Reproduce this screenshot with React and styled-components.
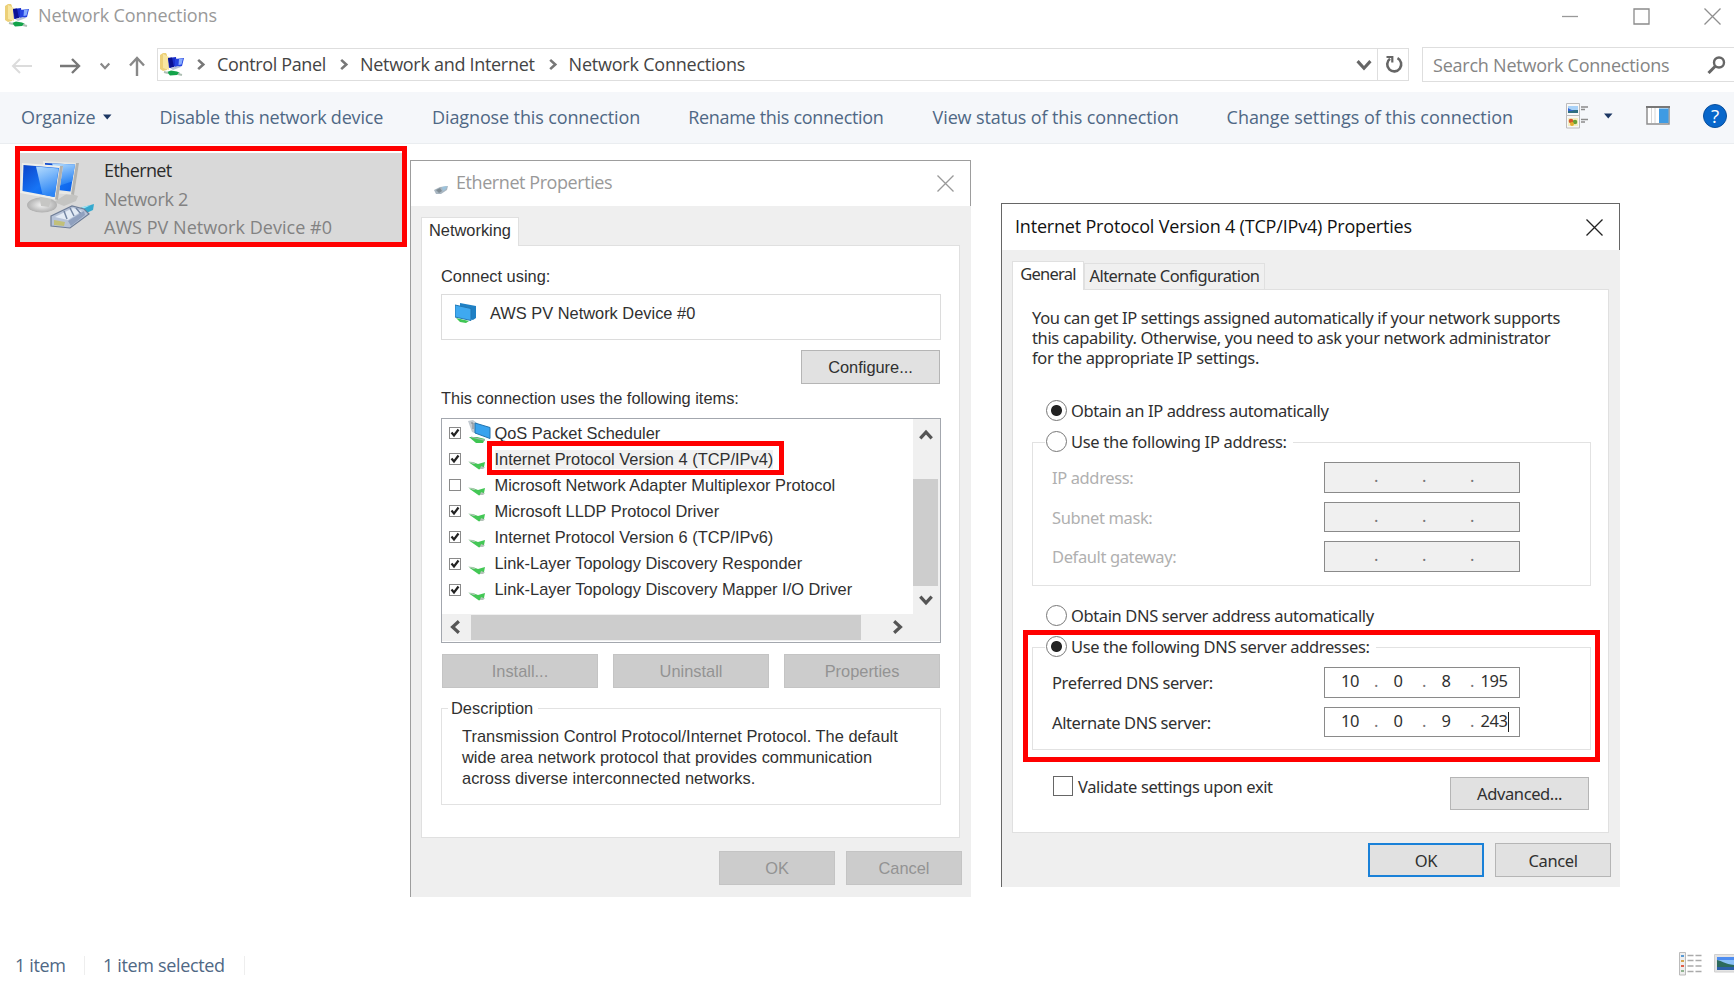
import React from 'react';
import styled, { createGlobalStyle, css } from 'styled-components';

/* ---------- icons ---------- */

const FolderIcon = () => (
  <svg width="25" height="24" viewBox="0 0 25 24">
    <path d="M0 2l3-2h3l1 2v15l-4 1-3-2z" fill="#ecd078" />
    <path d="M3 1l6 3v13l-6-2z" fill="#f8e6a0" />
    <path d="M8 5l8-1 1 9-8 2z" fill="#1a2fcb" />
    <path d="M8 5l4-.5 2 9.500-4 1z" fill="#0a1192" />
    <path d="M15 6l9-1-2 8-7 2z" fill="#2443e0" />
    <path d="M19 6l4-.5-1.500 6-3 .5z" fill="#86abff" />
    <path d="M10 15l8-2 3 1-8 3z" fill="#b9c3d6" />
    <path d="M7 19l4-1.500 6 1 3 1.500-3 2-7 .5z" fill="#13a34a" />
    <path d="M4 19l4 1M18 21l4 1" stroke="#aebfb3" strokeWidth="2" />
  </svg>
);

const NetworkIcon = () => (
  <svg width="76" height="72" viewBox="0 0 76 72">
    <defs>
      <linearGradient id="screen" x1="0" y1="0" x2="1" y2="1">
        <stop offset="0" stopColor="#0b43c9" />
        <stop offset="0.55" stopColor="#1774f5" />
        <stop offset="1" stopColor="#0a5fe8" />
      </linearGradient>
      <linearGradient id="gleam" x1="0" y1="0" x2="0.3" y2="1">
        <stop offset="0" stopColor="#b5dcfd" />
        <stop offset="1" stopColor="#2d86f5" />
      </linearGradient>
      <radialGradient id="foot">
        <stop offset="0" stopColor="#f4f4f4" />
        <stop offset="1" stopColor="#b0b0b0" />
      </radialGradient>
    </defs>
    <path d="M34 42l14-9 10 3-2 5-12 5z" fill="#c4c4c2" />
    <path d="M23 1l36 2-5 32-30-3z" fill="#e8e8e4" />
    <path d="M56 3l3 0-5 32-3-.5z" fill="#b3b3b0" />
    <path d="M25 3l30 1.500-4.500 27-25-3z" fill="url(#screen)" />
    <path d="M32 3.500l23 1-3 17-12 4z" fill="url(#gleam)" />
    <ellipse cx="22" cy="45" rx="15" ry="7.500" fill="url(#foot)" />
    <path d="M19 34l13 2-3 11-8-1z" fill="#c6c6c4" />
    <path d="M2 3l41 3-5 34-38-7z" fill="#eeeeea" />
    <path d="M40 6l3 0-5 34-3-.5z" fill="#b0b0ae" />
    <path d="M3.500 5l35.500 3-4.500 29-32-6z" fill="url(#screen)" />
    <path d="M16 6.500l22.500 2-4 28.500-12-2.500z" fill="url(#gleam)" />
    <path d="M60 48l14-4-1 6-11 5z" fill="#35a9cf" />
    <path d="M62 47l9-2-8 4z" fill="#9be3f5" />
    <path d="M31 56l21-10 12 3 5 5-19 14-19-2z" fill="#b7c3d8" stroke="#6e7d97" strokeWidth="1.200" />
    <path d="M35 57l18-9 9 3-14 9z" fill="#e3ebf5" />
    <path d="M44 51l3 8M50 48l4 8M56 48l5 6" stroke="#7385a3" strokeWidth="1.500" fill="none" />
    <path d="M34 60l11 2-1 4-10-1z" fill="#c2c07a" />
    <path d="M48 61l16-10 1 4-14 11z" fill="#8fa0be" />
  </svg>
);

const PlugIcon = () => (
  <svg width="14" height="9" viewBox="0 0 14 9">
    <path d="M0 4l6-3 8-1-1 4-6 4-5 0z" fill="#a9b6c1" />
    <path d="M2 4l4-2 2 3-3 2z" fill="#7f8c94" />
    <path d="M8 1l5-1-1 3-3 2z" fill="#9cc3dc" />
  </svg>
);

const AdapterIcon = () => (
  <svg width="22" height="20" viewBox="0 0 22 20">
    <path d="M5 0l16 3v12l-3 2-13-3z" fill="#1f80c4" />
    <path d="M0 2l16 3.500v12L0 14z" fill="#3fa9f0" stroke="#2277b3" />
    <path d="M1 15l13 3-3 2-6-1z" fill="#3fc653" />
  </svg>
);

const QosIcon = () => (
  <svg width="23" height="26" viewBox="0 0 23 26">
    <path d="M0 1l5-1 4 3v11l-5-2z" fill="#c3cbd2" />
    <path d="M3 3l2 0v6" fill="none" stroke="#7c8790" />
    <path d="M7 3l15 4.500v11L7 13z" fill="#38a3ee" stroke="#2374ae" />
    <path d="M1 17l8 0 8 2-2 4-7 0z" fill="#3fc653" />
    <path d="M3 16.500l14 3v1.500L3 17.500z" fill="#9fb3a8" />
  </svg>
);

const ProtocolIcon = () => (
  <svg width="23" height="26" viewBox="0 0 23 26">
    <path d="M1 16.500l5 0 4 1.500 7-2-1 5-5 2.500z" fill="#43c755" />
    <path d="M0 15.500l5 .5 3 2-3 0z" fill="#a8c7ae" />
    <path d="M13 20l4 1.500-2 1.500-3 0z" fill="#b5c2ba" />
  </svg>
);

const Chevron = ({ d = 'down', size = 14, color = '#555', weight = 3 }) => {
  const paths = {
    down: 'M2 4l5 5.500 5-5.500',
    up: 'M2 10l5-5.500 5 5.500',
    left: 'M9.500 2l-5.500 5 5.500 5',
    right: 'M4.500 2l5.500 5-5.500 5',
  };
  return (
    <svg width={size} height={size} viewBox="0 0 14 14" fill="none" stroke={color} strokeWidth={weight}>
      <path d={paths[d]} />
    </svg>
  );
};

const Caret = () => (
  <svg width="9" height="6" viewBox="0 0 9 6">
    <path d="M0 .5h8.500L4.250 5.500z" fill="#1c3763" />
  </svg>
);

const Arrow = ({ color, left, up }) => (
  <svg width="22" height="20" viewBox="0 0 22 20" fill="none" stroke={color} strokeWidth={left ? 2 : 2.400}>
    {up && <path d="M11 20V2M4 9.500l7-7.500 7 7.500" />}
    {left && <path d="M21 10H2M9 3l-7 7 7 7" />}
    {!up && !left && <path d="M1 10h19M13 3l7 7-7 7" />}
  </svg>
);

const Cross = ({ color }) => (
  <svg width="17" height="17" viewBox="0 0 17 17" stroke={color} strokeWidth="1.300">
    <path d="M.5 .5l16 16M16.500 .5l-16 16" />
  </svg>
);

const RefreshIcon = () => (
  <svg width="19" height="19" viewBox="0 0 19 19" fill="none" stroke="#666" strokeWidth="2.600">
    <path d="M12.500 3.200a7 7 0 1 1-7.500 .6" />
    <path d="M1.500 2h5.800v5.600" strokeWidth="2.200" />
  </svg>
);

const SearchIcon = () => (
  <svg width="19" height="18" viewBox="0 0 19 18" fill="none" stroke="#666">
    <circle cx="12" cy="6.500" r="5" strokeWidth="2.400" />
    <path d="M8.500 10L1.500 17" strokeWidth="3" />
  </svg>
);

const ViewIcon = () => (
  <svg width="23" height="26" viewBox="0 0 23 26">
    <path d="M.5 .5h13v12H.5zM.5 12.500h13v12.500H.5z" fill="#f8f8f8" stroke="#bcbcbc" />
    <path d="M2 3h10v7H2z" fill="#a9d2f8" />
    <path d="M2 6l4 1 6 0v3H2z" fill="#2f6e80" />
    <path d="M2 5l3 2 4 1-7 0z" fill="#3566d8" />
    <path d="M2 15h10v8H2z" fill="#f3efc2" />
    <circle cx="5" cy="18" r="2.300" fill="#d8572e" />
    <circle cx="9" cy="19" r="2.300" fill="#6aa136" />
    <circle cx="6" cy="21" r="2" fill="#e4ae2d" />
    <path d="M15 4h7M15 6.500h4M15 16.500h7M15 19h4" stroke="#8c8c8c" strokeWidth="1.300" />
  </svg>
);

const PaneIcon = () => (
  <svg width="24" height="19" viewBox="0 0 24 19">
    <path d="M1 1h22v17H1z" fill="#fff" stroke="#8f8f8f" strokeWidth="1.500" />
    <path d="M0 1h24" stroke="#777" strokeWidth="2" />
    <path d="M5.500 2v15M9 2v15" stroke="#d6d6d6" />
    <path d="M13 2.500h9.500V17H13z" fill="#3f9be3" />
  </svg>
);

const DetailsIcon = () => (
  <svg width="23" height="24" viewBox="0 0 23 24">
    <path d="M.5 .5h6v22.500h-6z" fill="#eee" stroke="#bbb" />
    <path d="M2 4h3" stroke="#5a9bd5" strokeWidth="2" />
    <path d="M2 9h3" stroke="#d6a44d" strokeWidth="2" />
    <path d="M2 14h3" stroke="#e0604a" strokeWidth="2" />
    <path d="M2 19h3" stroke="#8fb38f" strokeWidth="2" />
    <path d="M8.500 3.500h6M8.500 8.500h6M8.500 14h6M8.500 19.500h6M16.500 3.500h6M16.500 8.500h6M16.500 14h6M16.500 19.500h6" stroke="#aaa" strokeWidth="1.600" />
  </svg>
);

const ThumbsIcon = () => (
  <svg width="20" height="19" viewBox="0 0 20 19">
    <path d="M.5 .5H22v17.500H.5z" fill="#e4e4e4" stroke="#d0d0d0" />
    <path d="M3 3h20v13H3z" fill="#8cc1f7" />
    <path d="M3 3h20v3H3z" fill="#4e8df0" />
    <path d="M3 6c5 1 8 4 17 5v3H3z" fill="#2c6a5c" />
    <path d="M3 13h20v3H3z" fill="#2c5fa8" />
  </svg>
);

/* ---------- explorer window ---------- */

const Explorer = () => (
  <Window>
    <TitleBar>
      <FolderIcon />
      <WindowTitle $ls={-0.09}>Network Connections</WindowTitle>
      <WindowButtons>
        <svg width="16" height="17" viewBox="0 0 16 17">
          <path d="M0 8.500h16" stroke="#999" strokeWidth="1.300" />
        </svg>
        <svg width="17" height="17" viewBox="0 0 17 17">
          <path d="M1 1h15v15H1z" fill="none" stroke="#8a8a8a" strokeWidth="1.300" />
        </svg>
        <Cross color="#8f8f8f" />
      </WindowButtons>
    </TitleBar>

    <NavRow>
      <NavButtons>
        <Arrow left color="#dcdcdc" />
        <Arrow color="#777" />
        <Chevron size={12} color="#888" weight={2.6} />
        <Arrow up color="#888" />
      </NavButtons>
      <Address>
        <FolderIcon />
        <Crumbs>
          {crumbs.map(crumb => (
            <Crumb key={crumb.name} $ls={crumb.ls}>
              <Chevron d="right" size={13} color="#777" weight={2.8} />
              <span>{crumb.name}</span>
            </Crumb>
          ))}
        </Crumbs>
        <Chevron size={18} color="#666" weight={2.4} />
        <Refresh>
          <RefreshIcon />
        </Refresh>
      </Address>
      <Search>
        <Placeholder>Search Network Connections</Placeholder>
        <SearchIcon />
      </Search>
    </NavRow>

    <Toolbar>
      <Commands>
        <Command $ls={-0.1} $gap={47}>
          Organize
          <Caret />
        </Command>
        {commands.map(command => (
          <Command key={command.name} $ls={command.ls} $gap={command.gap}>
            {command.name}
          </Command>
        ))}
      </Commands>
      <ViewTools>
        <ViewIcon />
        <Caret />
        <PaneIcon />
        <Help>?</Help>
      </ViewTools>
    </Toolbar>

    <Files>
      <Connection>
        <NetworkIcon />
        <ConnectionText>
          <ConnectionName>Ethernet</ConnectionName>
          <ConnectionInfo $ls={-0.29}>Network 2</ConnectionInfo>
          <ConnectionInfo $ls={0.04}>AWS PV Network Device #0</ConnectionInfo>
        </ConnectionText>
      </Connection>
    </Files>

    <StatusBar>
      <Status $width={70}>1 item</Status>
      <Status $width={142}>1 item selected</Status>
      <StatusIcons>
        <DetailsIcon />
        <ThumbsIcon />
      </StatusIcons>
    </StatusBar>
  </Window>
);

const crumbs = [
  { name: 'Control Panel', ls: -0.35 },
  { name: 'Network and Internet', ls: -0.3 },
  { name: 'Network Connections', ls: -0.22 },
];

const commands = [
  { name: 'Disable this network device', ls: -0.2, gap: 49 },
  { name: 'Diagnose this connection', ls: -0.12, gap: 48 },
  { name: 'Rename this connection', ls: -0.3, gap: 49 },
  { name: 'View status of this connection', ls: -0.12, gap: 48 },
  { name: 'Change settings of this connection', ls: -0.05, gap: 0 },
];

/* ---------- ethernet properties ---------- */

const EthernetProperties = () => (
  <EthernetDialog>
    <DialogTitle $height={45} $muted>
      <PlugIcon />
      <Title $ls={-0.43}>Ethernet Properties</Title>
      <Cross color="#999" />
    </DialogTitle>
    <DialogBody>
      <Tabs>
        <Tab $active $width={98}>Networking</Tab>
      </Tabs>
      <NetworkingPanel>
        <Label>Connect using:</Label>
        <Device>
          <AdapterIcon />
          AWS PV Network Device #0
        </Device>
        <ConfigureButton>Configure...</ConfigureButton>
        <Label>This connection uses the following items:</Label>
        <ItemList>
          <Items>
            {items.map(item => (
              <Item key={item.name}>
                <ItemCheck>
                  {item.checked && (
                    <svg width="10" height="10" viewBox="0 0 10 10">
                      <path d="M1.500 4.500l2.500 3 4.500-6" fill="none" stroke="#222" strokeWidth="2.200" />
                    </svg>
                  )}
                </ItemCheck>
                {item.qos ? <QosIcon /> : <ProtocolIcon />}
                {item.marked ? (
                  <MarkedName>
                    {item.name}
                    <ItemFrame />
                  </MarkedName>
                ) : (
                  <span>{item.name}</span>
                )}
              </Item>
            ))}
          </Items>
          <VerticalScroll>
            <Chevron d="up" size={16} weight={2.8} />
            <VerticalThumb />
            <Chevron size={16} weight={2.8} />
          </VerticalScroll>
          <HorizontalScroll>
            <Chevron d="left" size={16} weight={2.8} />
            <HorizontalThumb />
            <Chevron d="right" size={16} weight={2.8} />
          </HorizontalScroll>
        </ItemList>
        <ItemButtons>
          <Button $disabled>Install...</Button>
          <Button $disabled>Uninstall</Button>
          <Button $disabled>Properties</Button>
        </ItemButtons>
        <Description>
          <DescriptionLegend>Description</DescriptionLegend>
          <p>
            Transmission Control Protocol/Internet Protocol. The default
            <br />
            wide area network protocol that provides communication
            <br />
            across diverse interconnected networks.
          </p>
        </Description>
      </NetworkingPanel>
      <Actions $top={13} $gap={11} $right={9}>
        <Button $disabled $width={116}>OK</Button>
        <Button $disabled $width={116}>Cancel</Button>
      </Actions>
    </DialogBody>
  </EthernetDialog>
);

const items = [
  { name: 'QoS Packet Scheduler', checked: true, qos: true },
  { name: 'Internet Protocol Version 4 (TCP/IPv4)', checked: true, marked: true },
  { name: 'Microsoft Network Adapter Multiplexor Protocol', checked: false },
  { name: 'Microsoft LLDP Protocol Driver', checked: true },
  { name: 'Internet Protocol Version 6 (TCP/IPv6)', checked: true },
  { name: 'Link-Layer Topology Discovery Responder', checked: true },
  { name: 'Link-Layer Topology Discovery Mapper I/O Driver', checked: true },
];

/* ---------- tcp/ipv4 properties ---------- */

const IpInput = ({ value = ['', '', '', ''], disabled, focused }) => (
  <IpBox $disabled={disabled}>
    {value.map((octet, i) => (
      <React.Fragment key={i}>
        {i > 0 && <Dot>.</Dot>}
        <Octet>
          {octet}
          {focused && i === 3 && <TextCursor />}
        </Octet>
      </React.Fragment>
    ))}
  </IpBox>
);

const Ipv4Properties = () => (
  <Ipv4Dialog>
    <DialogTitle $height={46}>
      <Title $ls={-0.19}>Internet Protocol Version 4 (TCP/IPv4) Properties</Title>
      <Cross color="#222" />
    </DialogTitle>
    <DialogBody>
      <Tabs>
        <Tab $active $width={72} $ls={-0.75}>General</Tab>
        <Tab $width={181} $ls={-0.56}>Alternate Configuration</Tab>
      </Tabs>
      <GeneralPanel>
        <Intro>
          You can get IP settings assigned automatically if your network supports
          <br />
          this capability. Otherwise, you need to ask your network administrator
          <br />
          for the appropriate IP settings.
        </Intro>
        <Option $top={32}>
          <Radio $checked />
          Obtain an IP address automatically
        </Option>
        <Group $height={144} $top={21}>
          <GroupOption $ls={-0.3}>
            <Radio />
            Use the following IP address:
          </GroupOption>
          <Field $disabled>
            <span>IP address:</span>
            <IpInput disabled />
          </Field>
          <Field $disabled>
            <span>Subnet mask:</span>
            <IpInput disabled />
          </Field>
          <Field $disabled>
            <span>Default gateway:</span>
            <IpInput disabled />
          </Field>
        </Group>
        <Option $top={18}>
          <Radio />
          Obtain DNS server address automatically
        </Option>
        <Group $height={103} $top={21}>
          <GroupOption $ls={-0.36}>
            <Radio $checked />
            Use the following DNS server addresses:
          </GroupOption>
          <Field>
            <span>Preferred DNS server:</span>
            <IpInput value={['10', '0', '8', '195']} />
          </Field>
          <Field>
            <span>Alternate DNS server:</span>
            <IpInput value={['10', '0', '9', '243']} focused />
          </Field>
          <DnsFrame />
        </Group>
        <PanelFooter>
          <Validate>
            <Checkbox />
            Validate settings upon exit
          </Validate>
          <Button $width={139}>Advanced...</Button>
        </PanelFooter>
      </GeneralPanel>
      <Actions $top={10} $gap={11} $right={9}>
        <Button $primary $width={116}>OK</Button>
        <Button $width={116}>Cancel</Button>
      </Actions>
    </DialogBody>
  </Ipv4Dialog>
);

const App = () => (
  <>
    <GlobalStyle />
    <Explorer />
    <EthernetProperties />
    <Ipv4Properties />
  </>
);

/* ---------- styles ---------- */

const GlobalStyle = createGlobalStyle`
  * {
    box-sizing: border-box;
  }
  body {
    margin: 0;
    overflow: hidden;
    background: #fff;
    font-family: "Open Sans", "Segoe UI", sans-serif;
    font-size: 18px;
    white-space: nowrap;
  }
  svg {
    display: block;
    flex: none;
  }
  p {
    margin: 0;
  }
`;

const tracking = css`
  letter-spacing: ${p => p.$ls || 0}px;
`;

const frame = css`
  position: absolute;
  border: 5px solid #f00;
  pointer-events: none;
`;

const Window = styled.div`
  display: flex;
  flex-direction: column;
  width: 1734px;
  height: 981px;
`;
const TitleBar = styled.div`
  display: flex;
  align-items: flex-start;
  height: 48px;
  padding: 4px 13px 0 5px;
  color: #999;
`;
const Title = styled.div`
  ${tracking}
  line-height: 22px;
`;
const WindowTitle = styled(Title)`
  padding-left: 8px;
`;
const WindowButtons = styled.div`
  display: flex;
  gap: 54.500px;
  margin: 4px 0 0 auto;
`;
const NavRow = styled.div`
  display: flex;
  height: 44px;
`;
const NavButtons = styled.div`
  display: grid;
  grid-template-columns: 48px 40px 27px 22px;
  align-items: center;
  width: 157px;
  height: 35px;
  padding-left: 11px;
`;
const Address = styled.div`
  display: flex;
  align-items: center;
  width: 1252px;
  height: 33px;
  padding-left: 2px;
  border: 1px solid #dedede;
  color: #444;
`;
const Crumbs = styled.div`
  display: flex;
  flex: 1;
  gap: 11px;
  padding-left: 9px;
`;
const Crumb = styled.div`
  ${tracking}
  display: flex;
  align-items: center;
  gap: 10px;
  line-height: 31px;
`;
const Refresh = styled.div`
  display: flex;
  align-items: center;
  height: 31px;
  margin-left: 4px;
  padding: 0 4px 0 7px;
  border-left: 1px solid #dedede;
`;
const Search = styled.div`
  display: flex;
  align-items: center;
  justify-content: space-between;
  flex: 1;
  height: 35px;
  margin: -1px -2px 0 13px;
  padding: 0 9px 0 10px;
  border: 1px solid #dedede;
`;
const Placeholder = styled.span`
  color: #858585;
  letter-spacing: -0.23px;
`;
const Toolbar = styled.div`
  display: flex;
  align-items: center;
  justify-content: space-between;
  height: 52px;
  padding: 0 8px 1px 21px;
  border-bottom: 1px solid #eaedf0;
  background: #f5f7fa;
  color: #4f6885;
`;
const Commands = styled.div`
  display: flex;
`;
const Command = styled.div`
  ${tracking}
  display: flex;
  align-items: center;
  gap: 8px;
  margin-right: ${p => p.$gap}px;
`;
const ViewTools = styled.div`
  display: grid;
  grid-template-columns: 38px 42px 57px 23px;
  align-items: center;
  padding-bottom: 3px;
`;
const Help = styled.div`
  width: 24px;
  height: 24px;
  border: 1px solid #0a4f9c;
  border-radius: 50%;
  background: #0867cb;
  color: #fff;
  font-size: 19px;
  line-height: 22px;
  text-align: center;
`;
const Files = styled.div`
  flex: 1;
  padding: 2px 15px;
`;
const Connection = styled.div`
  display: flex;
  width: 392px;
  height: 101px;
  padding: 9px 0 0;
  border: 5px solid #f00;
  background: linear-gradient(#fff 2px, #d9d9d9 2px);
`;
const ConnectionText = styled.div`
  margin-top: -4px;
  padding-left: 8px;
  line-height: 28.500px;
`;
const ConnectionName = styled.div`
  color: #2b2b2b;
  letter-spacing: -0.6px;
`;
const ConnectionInfo = styled.div`
  ${tracking}
  color: #828282;
`;
const StatusBar = styled.div`
  display: flex;
  align-items: center;
  height: 33px;
  padding: 2px 0 0 15px;
  color: #4f6885;
`;
const Status = styled.div`
  width: ${p => p.$width}px;
  margin-right: 18px;
  border-right: 1px solid #eee;
  letter-spacing: -0.34px;
  line-height: 19px;
`;
const StatusIcons = styled.div`
  display: flex;
  align-items: center;
  gap: 12px;
  margin: 0 0 4px auto;
`;

/* dialogs float over the explorer window */
const Dialog = styled.div`
  position: absolute;
  display: flex;
  flex-direction: column;
  border: solid ${p => p.$edge};
  border-width: 1px 0 0 1px;
  color: #303030;
`;
const EthernetDialog = styled(Dialog).attrs({ $edge: '#9d9d9d' })`
  left: 410px;
  top: 160px;
  width: 561px;
  height: 737px;
  font: 16.400px "Liberation Sans", Arial, sans-serif;
`;
const Ipv4Dialog = styled(Dialog).attrs({ $edge: '#666' })`
  left: 1001px;
  top: 203px;
  width: 619px;
  height: 684px;
  font: 16.500px "Noto Sans", Tahoma, sans-serif;
  letter-spacing: -0.38px;
`;
const DialogTitle = styled.div`
  display: flex;
  align-items: center;
  height: ${p => p.$height}px;
  padding: 0 16px 0 ${p => (p.$muted ? 23 : 13)}px;
  border-right: 1px solid ${p => (p.$muted ? '#9d9d9d' : '#666')};
  background: #fff;
  color: ${p => (p.$muted ? '#999' : '#111')};
  font: 18px "Open Sans", "Segoe UI", sans-serif;

  ${Title} {
    flex: 1;
    margin-top: -3px;
    padding-left: ${p => (p.$muted ? 8 : 0)}px;
  }

  svg:first-child {
    margin-top: 13px;
  }
`;
const DialogBody = styled.div`
  flex: 1;
  padding: 10px 11px 0 10px;
  background: #efefef;
`;
const Tabs = styled.div`
  display: flex;
  align-items: flex-end;
  height: 29px;
`;
const Tab = styled.div`
  ${tracking}
  width: ${p => p.$width}px;
  height: ${p => (p.$active ? 29 : 26)}px;
  margin-bottom: ${p => (p.$active ? -1 : 0)}px;
  border: 1px solid #e0e0e0;
  border-bottom: 0;
  background: ${p => (p.$active ? '#fff' : '#f0f0f0')};
  line-height: 24px;
  text-align: center;
  z-index: ${p => (p.$active ? 1 : 0)};
`;
const Panel = styled.div`
  display: flex;
  flex-direction: column;
  border: 1px solid #e0e0e0;
  background: #fff;
`;
const NetworkingPanel = styled(Panel)`
  height: 593px;
  padding: 20px 18px 0 19px;
`;
const GeneralPanel = styled(Panel)`
  width: 597px;
  height: 544px;
  padding: 18px 17px 0 19px;
`;
const Label = styled.div`
  line-height: 20px;
`;
const Device = styled.div`
  display: flex;
  gap: 13px;
  height: 46px;
  margin: 8px 0 10px;
  padding: 8px 13px;
  border: 1px solid #dcdcdc;
  line-height: 20px;
`;
const Button = styled.div`
  display: flex;
  align-items: center;
  justify-content: center;
  width: ${p => p.$width || 156}px;
  height: 34px;
  border: 1px solid #b5b5b5;
  background: #e1e1e1;

  ${p => p.$disabled && css`
    border-color: #c4c4c4;
    background: #ccc;
    color: #939393;
  `}
  ${p => p.$primary && css`
    border: 2px solid #1a81d8;
  `}
`;
const ConfigureButton = styled(Button).attrs({ $width: 139 })`
  align-self: flex-end;
  margin: 0 1px 4px 0;
`;
const ItemList = styled.div`
  display: grid;
  grid-template: 195px 27px / 1fr 27px;
  height: 225px;
  margin-top: 10px;
  border: 1px solid #a3a7ae;
`;
const Items = styled.div`
  padding: 1px 0 0 7px;
`;
const Item = styled.div`
  display: grid;
  grid-template-columns: 19px 26.500px 1fr;
  align-items: center;
  height: 26.100px;
`;
const ItemCheck = styled.div`
  width: 12px;
  height: 12px;
  border: 1px solid #8a8a8a;
`;
/* red frame drawn round the item name */
const MarkedName = styled.div`
  position: relative;
  justify-self: start;
  background: #f1f1f1;
`;
const ItemFrame = styled.div`
  ${frame}
  left: -8px;
  top: -9px;
  width: 297px;
  height: 34px;
`;
const VerticalScroll = styled.div`
  display: flex;
  flex-direction: column;
  align-items: center;
  justify-content: space-between;
  padding: 8px 2px 6px 0;
  background: #f0f0f0;
`;
const VerticalThumb = styled.div`
  width: 25px;
  height: 107px;
  margin-top: 30px;
  background: #cdcdcd;
`;
const HorizontalScroll = styled.div`
  display: flex;
  align-items: center;
  grid-column: 1 / 3;
  padding: 0 35px 1px 6px;
  background: #f0f0f0;
`;
const HorizontalThumb = styled.div`
  width: 390px;
  height: 25px;
  margin: 0 auto 0 7px;
  background: #cdcdcd;
`;
const ItemButtons = styled.div`
  display: flex;
  gap: 15px;
  margin: 11px 0 0 1px;
`;
const Description = styled.div`
  height: 97px;
  margin-top: 20px;
  padding-left: 20px;
  border: 1px solid #e2e2e2;
  letter-spacing: 0.02px;
  line-height: 21px;
`;
const DescriptionLegend = styled.div`
  width: 90px;
  margin: -11px 0 7px -14px;
  padding-left: 3px;
  background: #fff;
`;
const Actions = styled.div`
  display: flex;
  justify-content: flex-end;
  gap: ${p => p.$gap}px;
  margin-top: ${p => p.$top}px;
  margin-right: ${p => p.$right - 11}px;
`;
const Intro = styled.p`
  letter-spacing: -0.36px;
  line-height: 19.800px;
`;
const Option = styled.div`
  display: flex;
  align-items: center;
  gap: 4px;
  height: 22px;
  margin-top: ${p => p.$top}px;
  padding-left: 14px;
`;
const Radio = styled.span`
  flex: none;
  width: 21px;
  height: 21px;
  border: 1.500px solid #777;
  border-radius: 50%;
  background: ${p => (p.$checked ? 'radial-gradient(circle, #222 5px, #fff 6px)' : '#fff')};
`;
const Group = styled.div`
  position: relative;
  display: flex;
  flex-direction: column;
  align-items: flex-start;
  gap: 9px;
  height: ${p => p.$height}px;
  margin-top: ${p => p.$top}px;
  border: 1px solid #e2e2e2;
`;
const GroupOption = styled(Option)`
  ${tracking}
  margin: -13px 0 1px 12px;
  padding: 0 6px 0 1px;
  background: #fff;
`;
const Field = styled.div`
  display: grid;
  grid-template-columns: 272px 196px;
  align-items: center;
  padding-left: 19px;
  color: ${p => (p.$disabled ? '#b0b0b0' : 'inherit')};
`;
const IpBox = styled.div`
  display: flex;
  height: 30.500px;
  padding-left: 3px;
  border: 1px solid #8a8a8a;
  background: ${p => (p.$disabled ? '#f0f0f0' : '#fff')};
  line-height: 25px;
`;
const Octet = styled.span`
  display: flex;
  justify-content: center;
  width: 44px;
`;
const Dot = styled.span`
  width: 4px;
  color: #777;
  text-indent: 2px;
`;
const TextCursor = styled.span`
  width: 1px;
  height: 20px;
  margin: 4px -1px 0 0;
  background: #222;
`;
const DnsFrame = styled.div`
  ${frame}
  left: -10px;
  top: -18px;
  width: 577px;
  height: 132px;
`;
const PanelFooter = styled.div`
  display: flex;
  justify-content: space-between;
  margin-top: 25px;
  padding: 0 2px 0 21px;

  ${Button} {
    height: 33px;
    margin-top: 2px;
  }
`;
const Validate = styled.div`
  display: flex;
  align-items: center;
  gap: 5px;
  height: 22px;
`;
const Checkbox = styled.span`
  width: 20px;
  height: 20px;
  border: 1px solid #666;
`;

export default App;
